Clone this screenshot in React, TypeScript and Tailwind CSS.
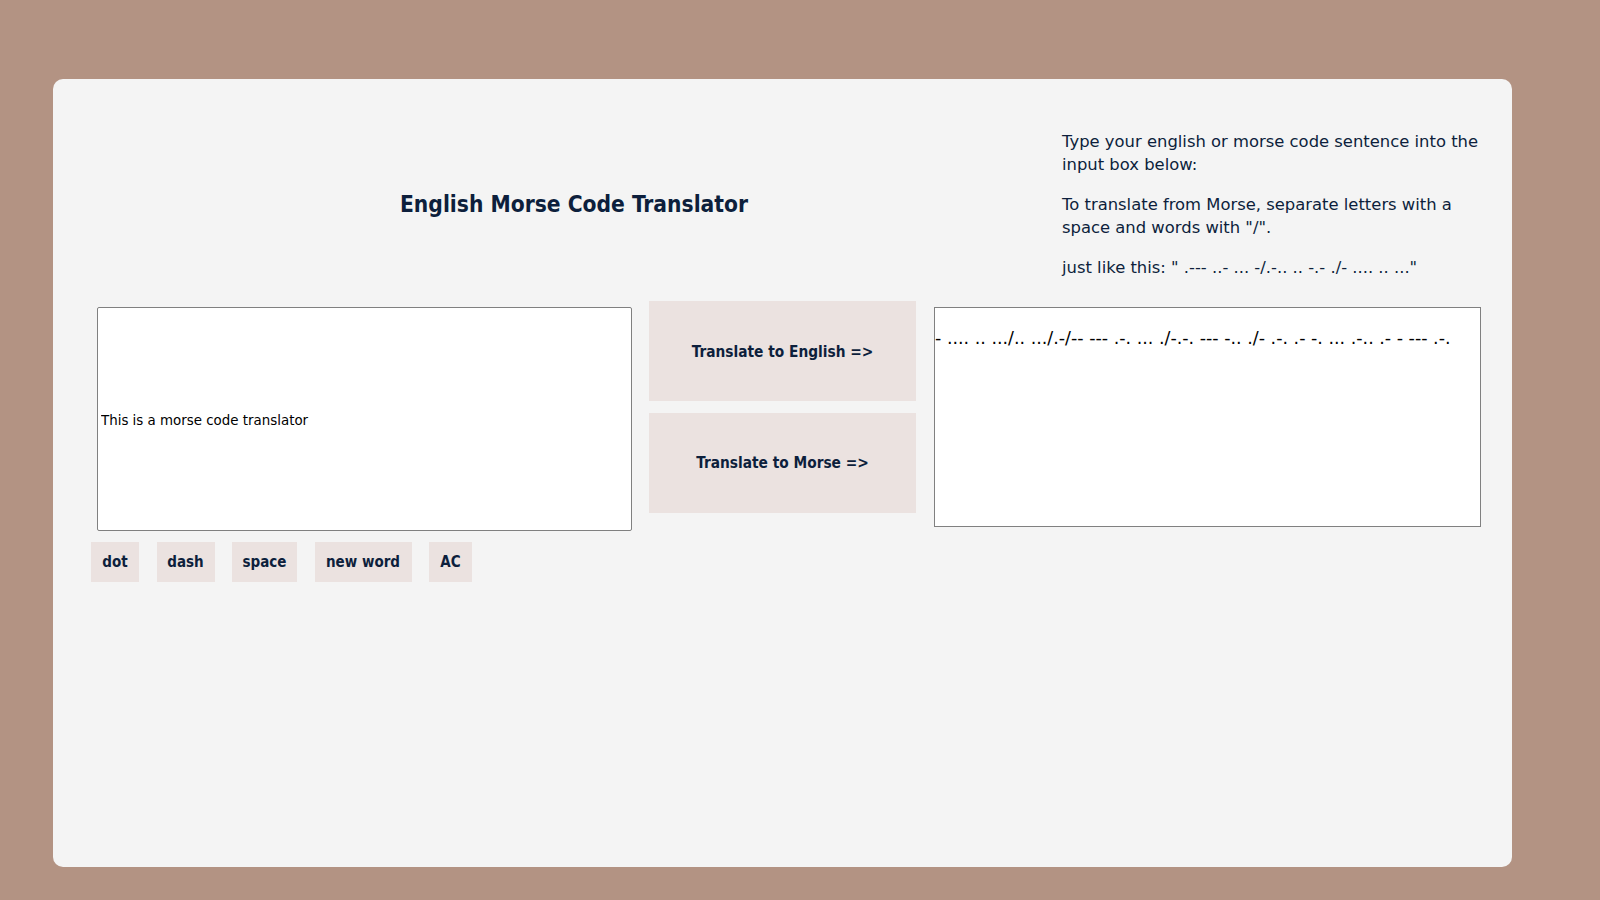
import React from "react";

const BOLD = "font-['DejaVu_Sans_Condensed','DejaVu_Sans',Verdana,sans-serif]";
const REG = "font-['DejaVu_Sans',Verdana,sans-serif]";

export default function App() {
  const small = [
    { label: "dot", w: "w-[48px]" },
    { label: "dash", w: "w-[58px]" },
    { label: "space", w: "w-[65px]" },
    { label: "new word", w: "w-[97px]" },
    { label: "AC", w: "w-[43px]" },
  ];
  return (
    <div className={`min-h-[900px] w-full bg-[#b39383] pt-[79px] pl-[53px] ${BOLD}`}>
      <div className="w-[1459px] h-[788px] rounded-[10px] bg-[#f4f4f4] flex flex-col">
        {/* header */}
        <div className="flex items-center pt-[52px]">
          <div className="w-[1009px] pl-[33px] flex justify-center">
            <h1 className="text-[22.6px] font-bold text-[#0d1f3c]">English Morse Code Translator</h1>
          </div>
          <div className={`w-[434px] text-[16.4px] leading-[22.5px] text-[#0d1f3c] ${REG}`}>
            <p className="mb-[18px]">Type your english or morse code sentence into the input box below:</p>
            <p className="mb-[18px]">To translate from Morse, separate letters with a space and words with "/".</p>
            <p>just like this: " .--- ..- ... -/.-.. .. -.- ./- .... .. ..."</p>
          </div>
        </div>

        {/* main row */}
        <div className="flex items-start mt-[21px] ml-[38px]">
          <div className="w-[541px] flex flex-col">
            <input
              readOnly
              value="This is a morse code translator"
              className={`ml-[6px] mt-[6px] w-[535px] h-[224px] bg-white border border-[#808080] rounded-[2px] px-[3px] pt-[4px] pb-0 text-[13.4px] text-black outline-none ${REG}`}
            />
            <div className="flex gap-[17.5px] mt-[11px]">
              {small.map((b) => (
                <button
                  key={b.label}
                  className={`${b.w} h-[40px] pt-[2px] bg-[#ebe2e0] text-[#0d1f3c] text-[15px] font-bold flex items-center justify-center`}
                >
                  {b.label}
                </button>
              ))}
            </div>
          </div>

          <div className="ml-[17px] w-[267px] flex flex-col gap-[12px]">
            <button className="h-[100px] pt-[4px] bg-[#ebe2e0] text-[#0d1f3c] text-[15.3px] font-bold flex items-center justify-center">
              Translate to English =&gt;
            </button>
            <button className="h-[100px] pt-[2px] bg-[#ebe2e0] text-[#0d1f3c] text-[15.3px] font-bold flex items-center justify-center">
              Translate to Morse =&gt;
            </button>
          </div>

          <div className={`ml-[18px] mt-[6px] w-[547px] h-[220px] bg-white border border-[#808080] text-[17.5px] text-black pt-[17px] ${REG}`}>
            - .... .. .../.. .../.-/-- --- .-. ... ./-.-. --- -.. ./- .-. .- -. ... .-.. .- - --- .-.
          </div>
        </div>
      </div>
    </div>
  );
}
